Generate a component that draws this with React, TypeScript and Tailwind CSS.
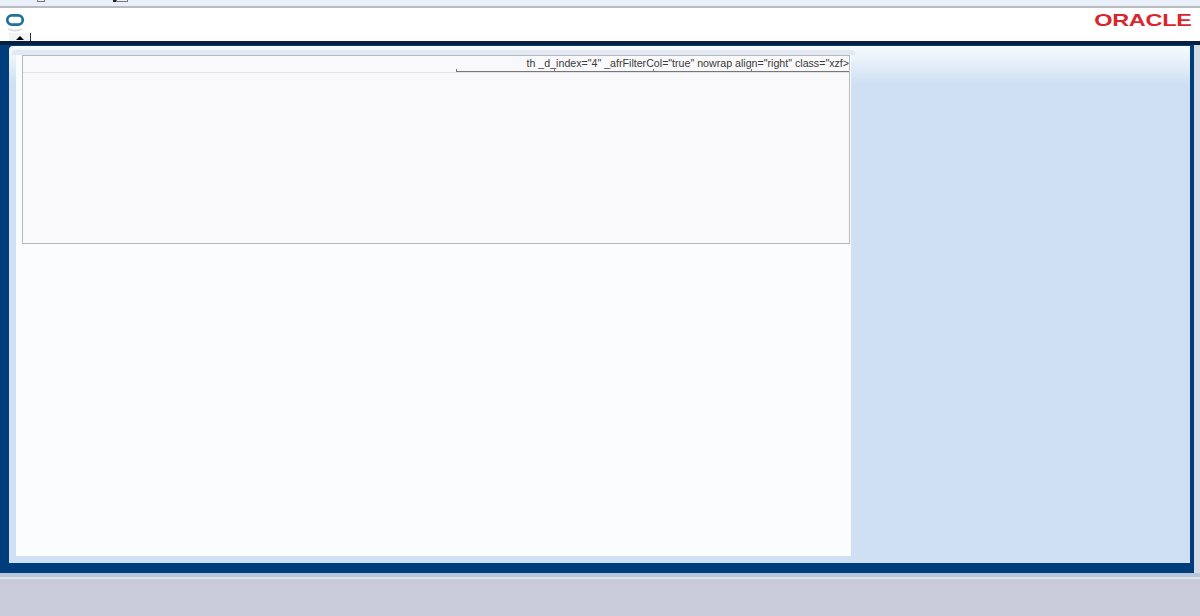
export default function App() {
    return <div className="w-[1200px] h-[616px] flex flex-col overflow-hidden bg-[#c9ccd8] font-['Liberation_Sans',Arial,sans-serif]">
        {/* browser strip */}
        <div className="h-[6px] shrink-0 bg-[#e9eff8] flex items-start">
            <div className="ml-[37px] w-[8px] h-[2px] border-b border-x border-[#777777]" />
            <div className="ml-[68px] w-[3px] h-[2px] bg-[#222222]" />
            <div className="w-[12px] h-[2px] border-b border-x border-[#777777]" />
        </div>
        <div className="h-[2px] shrink-0 bg-[#b9bbc0]" />

        {/* header */}
        <header className="h-[33px] shrink-0 bg-white flex justify-between">
            <div className="pl-[5px] pt-[5px] flex flex-col">
                <svg width="20" height="24" viewBox="0 0 20 24">
                    <rect x="2" y="2.4" width="16" height="9.6" rx="4.8" fill="none" stroke="#1f6f9f" strokeWidth="2.8" />
                    <path d="M3 16.5 Q10 20 17 16.5" fill="none" stroke="#d5dde3" strokeWidth="1.8" />
                </svg>
                <div className="ml-[4px] -mt-[3px] w-[22px] h-[8px] bg-[#f3f4f6] border-r border-[#333333] flex justify-center items-end">
                    <div className="w-0 h-0 border-x-[4px] border-x-transparent border-b-[4px] border-b-black mb-[1px]" />
                </div>
            </div>
            <div className="pr-[8px] pt-[3px]">
                <span className="block origin-right scale-x-[1.38] text-[#d8262e] text-[17px] leading-[20px] font-bold tracking-[-0.2px]">ORACLE</span>
            </div>
        </header>
        <div className="h-[4px] shrink-0 bg-[#06203f]" />

        {/* main frame */}
        <div className="h-[528px] shrink-0 flex bg-[#d4dbe6]">
            <div className="w-[1194px] bg-[#003d7c] pl-[9px] pr-[4px] pb-[10px] pt-[1px] flex flex-col">
                <div className="flex-1 flex rounded-tl-[4px] bg-[linear-gradient(to_bottom,#f8fbfe_0px,#cfe0f2_38px)]">
                    <div className="w-[846px] pt-[4px] flex flex-col">
                        <div className="ml-[3px] h-[5px] shrink-0 bg-[#e3e9f3] rounded-t-[4px]" />
                        <div className="flex-1 w-[842px] pl-[7px] pb-[7px]">
                            <div className="h-full bg-[#fbfcfe] flex flex-col">
                                <div className="ml-[6px] mr-[1px] h-[189px] border border-[#b8b9bc] bg-[#f9f9fb] flex flex-col">
                                    <div className="h-[17px] shrink-0 border-b border-[#e4e4e6] flex flex-col items-end">
                                        <div className="h-[15px] text-[10.65px] leading-[15px] text-[#3a3a3a] whitespace-nowrap">th _d_index="4" _afrFilterCol="true" nowrap align="right" class="xzf&gt;</div>
                                        <div className="-mt-[2px] w-[393px] h-[3px] border-b border-[#777777] flex">
                                            <div className="w-[98px] border-l border-[#777777]" />
                                            <div className="w-[99px] border-l border-[#777777]" />
                                            <div className="w-[98px] border-l border-[#777777]" />
                                            <div className="w-[98px] border-l border-[#777777]" />
                                        </div>
                                    </div>
                                </div>
                            </div>
                        </div>
                    </div>
                    <div className="flex-1" />
                </div>
            </div>
        </div>

        {/* footer */}
        <div className="h-[4px] shrink-0 bg-[#b5c6dd]" />
        <div className="h-[2px] shrink-0 bg-[#dfe1e9]" />
        <div className="flex-1 bg-[#c9ccd8]" />
    </div>
}
